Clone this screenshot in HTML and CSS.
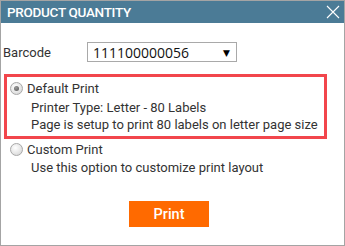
FILE: index.html
```html
<!DOCTYPE html>
<html>
<head>
<meta charset="utf-8">
<link rel="stylesheet" href="styles.css">
</head>
<body>
<div class="dialog">
  <div class="header">
    <span class="title">PRODUCT QUANTITY</span>
    <svg class="close" width="14" height="14" viewBox="0 0 14 14"><path d="M1 1 L13 13 M13 1 L1 13" stroke="#ffffff" stroke-width="1.1" fill="none"/></svg>
  </div>
  <div class="content">
    <div class="barcode-row">
      <span class="label">Barcode</span>
      <div class="select"><span class="select-value">111100000056</span><span class="arrow">&#9660;</span></div>
    </div>
    <div class="option option-selected">
      <div class="option-head"><span class="radio radio-checked"></span><span>Default Print</span></div>
      <div class="option-desc">
        <div>Printer Type: Letter - 80 Labels</div>
        <div>Page is setup to print 80 labels on letter page size</div>
      </div>
    </div>
    <div class="option option-plain">
      <div class="option-head"><span class="radio"></span><span>Custom Print</span></div>
      <div class="option-desc">
        <div>Use this option to customize print layout</div>
      </div>
    </div>
    <div class="actions"><button class="print-btn">Print</button></div>
  </div>
</div>
</body>
</html>
```
FILE: styles.css
```css
html, body { margin: 0; padding: 0; background: #ffffff; }
.dialog {
  width: 345px; height: 246px; box-sizing: border-box;
  border: 1px solid #a4a4a4;
  font-family: Roboto, "Liberation Sans", sans-serif;
  font-size: 13px; color: #333333;
  background: #ffffff;
}
.header {
  height: 22px; background: #4b7b96;
  display: flex; align-items: center; justify-content: space-between;
  padding: 0 4px 0 6px;
}
.title { color: #ffffff; font-size: 13.5px; font-weight: 500; letter-spacing: -0.3px; }
.close { display: block; margin-top: 0; }
.content { padding: 0 0 0 2px; }
.barcode-row { display: flex; align-items: center; margin-top: 19px; height: 20px; }
.label { width: 84px; color: #333; }
.select {
  width: 150px; height: 20px; box-sizing: border-box;
  border: 1px solid #a9a9a9; display: flex; align-items: center; justify-content: space-between;
  padding: 0 6px 0 5px;
  font-family: "Open Sans", "DejaVu Sans", sans-serif; font-size: 14px; color: #111;
}
.arrow { font-size: 9px; color: #000; }
.option { margin-left: 1px; width: 323px; box-sizing: border-box; }
.option-selected { border: 3px solid #f2464c; margin-top: 12px; padding: 1px 3px 3px 3px; }
.option-plain { padding: 1px 6px 0 6px; margin-top: 0; }
.option-head { display: flex; align-items: center; height: 20px; }
.option-plain .option-head { height: 18px; }
.radio {
  width: 11px; height: 11px; border-radius: 50%;
  border: 1px solid #a8a8a8;
  background: radial-gradient(circle at 40% 35%, #ffffff 0%, #e6e6e6 55%, #cfcfcf 100%);
  margin-right: 4px; position: relative; flex: none;
}
.radio-checked::after {
  content: ""; position: absolute; left: 3px; top: 3px; width: 5px; height: 5px; border-radius: 50%;
  background: radial-gradient(circle at 40% 35%, #9a9a9a 0%, #555555 100%);
}
.option-desc { padding-left: 21px; line-height: 17px; margin-top: 1px; }
.actions { margin-top: 25px; padding-left: 126px; }
.print-btn {
  width: 80px; height: 26px; border: 0; background: #ff6a00; color: #ffffff;
  font-family: Roboto, "Liberation Sans", sans-serif; font-size: 14.5px; font-weight: 500;
  padding: 0; display: block;
}
```
